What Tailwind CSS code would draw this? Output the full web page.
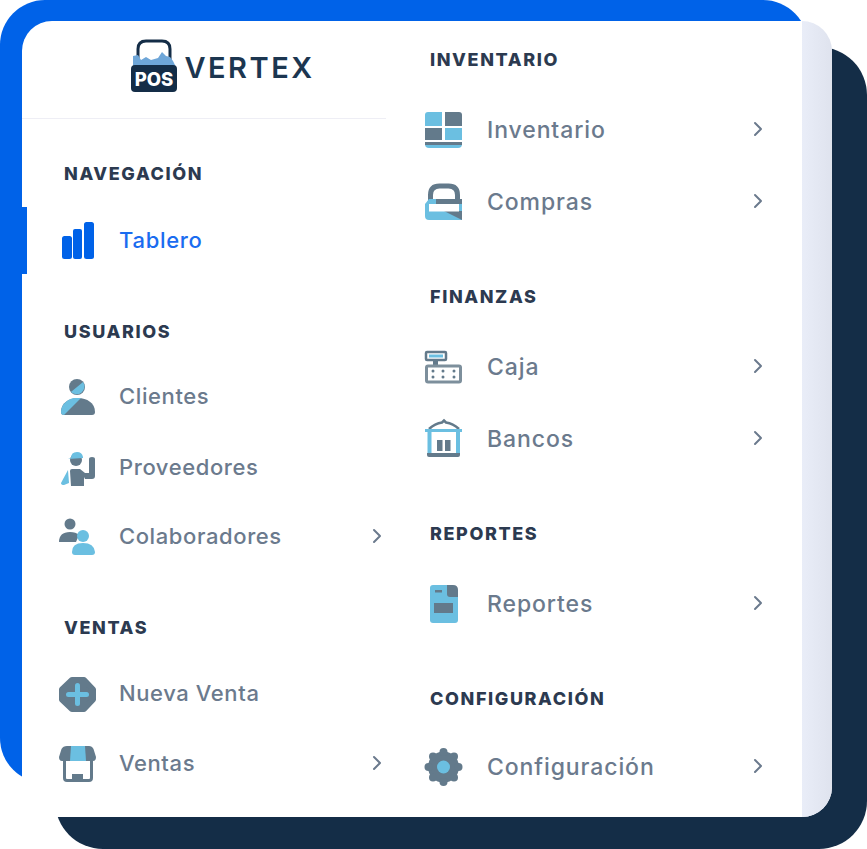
<!DOCTYPE html>
<html lang="es">
<head>
    <meta charset="UTF-8">
    <title>Vertex POS</title>
    <script src="https://cdn.jsdelivr.net/npm/@tailwindcss/browser@4"></script>
</head>
<body class="bg-white">
<div class="relative w-[867px] h-[849px] overflow-hidden font-['Inter',sans-serif]">
    <!-- background layers -->
    <div class="absolute left-[55px] top-[47px] w-[812px] h-[802px] rounded-[48px] bg-[#142d47]"></div>
    <div class="absolute left-0 top-0 w-[808px] h-[783px] rounded-[45px] bg-[#0062e8]"></div>

    <div class="absolute left-[22px] top-[21px] w-[810px] h-[796px] flex overflow-hidden rounded-tl-[30px] rounded-r-[30px] bg-white">
        <!-- left column -->
        <div class="w-[364px] shrink-0">
            <div class="h-[98px] border-b border-[#eeeef5] flex items-center justify-center pl-[37px] gap-[6px]">
                <svg class="w-[48px] h-[54px] shrink-0 mt-[-7px]" viewBox="0 0 48 54">
                    <path d="M8 26V10q0-8 8-8h16q8 0 8 8v16" fill="none" stroke="#142d47" stroke-width="3"/>
                    <path d="M3 17l5-1 3 5 5-3 5 3 7-2 4-6 4 4 4 1 3 4 3 6H3z" fill="#6ea6d8"/>
                    <path d="M1 30q0-4 4-4h38q4 0 4 4v19q0 4-4 4H5q-4 0-4-4z" fill="#142d47"/>
                    <text x="24" y="47" text-anchor="middle" font-family="Inter, sans-serif" font-size="18.500" font-weight="800" fill="#fff">POS</text>
                </svg>
                <span class="text-[29px] leading-none font-semibold tracking-[2.5px] text-[#1c3650] mt-[-4px]">VERTEX</span>
            </div>

            <p class="mt-[42px] ml-[42px] h-6 flex items-center text-[18px] font-extrabold tracking-[1.6px] text-[#2c3a50]">NAVEGACIÓN</p>
            <a class="mt-[22px] h-[67px] flex items-center border-l-[5px] border-[#0062e8] pl-[31px] text-[22px] font-medium tracking-[.7px] text-[#1a6cf0]">
                <svg class="w-[40px] h-[40px] shrink-0 mr-[21px]" viewBox="0 0 40 40">
                    <rect x="4" y="15" width="10" height="23" rx="2.500" fill="#0062e8"/>
                    <rect x="15" y="8" width="9" height="30" rx="2" fill="#0062e8"/>
                    <rect x="26" y="1" width="10" height="37" rx="2.500" fill="#0062e8"/>
                </svg>
                Tablero
            </a>

            <p class="mt-[45px] ml-[42px] h-6 flex items-center text-[18px] font-extrabold tracking-[1.6px] text-[#2c3a50]">USUARIOS</p>
            <a class="mt-[18px] h-[70px] flex items-center pl-[36px] text-[22px] font-medium tracking-[.6px] text-[#6b7a8d]">
                <svg class="w-[40px] h-[40px] shrink-0 mr-[21px]" viewBox="0 0 40 40">
                    <circle cx="19" cy="11" r="8" fill="#637a8b"/>
                    <path d="M12.900 16.100A8 8 0 0 0 25.100 5.900z" fill="#6bbfe1"/>
                    <path d="M3 36C3 27 11 22 20 22s17 5 17 14q0 3-3 3H6q-3 0-3-3z" fill="#637a8b"/>
                    <path d="M3 36c0-8 7-13 13-14h7L6 39q-3 0-3-3z" fill="#6bbfe1"/>
                </svg>
                Clientes
            </a>
            <a class="h-[71px] pt-[2px] flex items-center pl-[36px] text-[22px] font-medium tracking-[.6px] text-[#6b7a8d]">
                <svg class="w-[40px] h-[40px] shrink-0 mr-[21px]" viewBox="0 0 40 40">
                    <circle cx="18" cy="12" r="6" fill="#637a8b"/>
                    <path d="M10 11l3-1q0-6 6-6 5 0 6 5v1z" fill="#6bbfe1"/>
                    <path d="M12 23q0-2 2-2h8l5 4h4V11q0-2 3-2t3 2v17q0 3-3 3h-7l-1-2v9H13z" fill="#637a8b"/>
                    <path d="M10 22l-7 13q0 2 3 2l5-2z" fill="#6bbfe1"/>
                </svg>
                Proveedores
            </a>
            <a class="h-[68px] flex items-center pl-[36px] text-[22px] font-medium tracking-[.6px] text-[#6b7a8d]">
                <svg class="w-[40px] h-[40px] shrink-0 mr-[21px]" viewBox="0 0 40 40">
                    <circle cx="12" cy="8" r="5.500" fill="#637a8b"/>
                    <path d="M1 26q0-10 11-10 6 0 9 3l-3 7z" fill="#637a8b"/>
                    <circle cx="25" cy="20" r="6" fill="#6bbfe1"/>
                    <path d="M14 36q0-9 11-9t12 9q0 3-3 3H17q-3 0-3-3z" fill="#6bbfe1"/>
                </svg>
                Colaboradores
                <svg class="w-[12px] h-[16px] ml-auto mr-[3px]" viewBox="0 0 12 16"><path d="M3 2l6 6-6 6" fill="none" stroke="#6b7a8d" stroke-width="2" stroke-linecap="round" stroke-linejoin="round"/></svg>
            </a>

            <p class="mt-[45px] ml-[42px] h-6 flex items-center text-[18px] font-extrabold tracking-[1.6px] text-[#2c3a50]">VENTAS</p>
            <a class="mt-[19px] h-[70px] flex items-center pl-[36px] text-[22px] font-medium tracking-[.6px] text-[#6b7a8d]">
                <svg class="w-[40px] h-[40px] shrink-0 mr-[21px]" viewBox="0 0 40 40">
                    <path d="M14 7h12l9 9.500v10L26 36H14L4 26.500v-10z" fill="#637a8b" stroke="#637a8b" stroke-linejoin="round" stroke-width="6"/>
                    <rect x="8" y="19" width="23" height="5" rx="2.500" fill="#6bbfe1"/>
                    <rect x="17" y="10" width="5" height="23" rx="2.500" fill="#6bbfe1"/>
                </svg>
                Nueva Venta
            </a>
            <a class="h-[70px] flex items-center pl-[36px] text-[22px] font-medium tracking-[.6px] text-[#6b7a8d]">
                <svg class="w-[40px] h-[40px] shrink-0 mr-[21px]" viewBox="0 0 40 40">
                    <path d="M6.500 17v18q0 2.500 2.500 2.500h22q2.500 0 2.500-2.500V17" fill="#fff" stroke="#637a8b" stroke-width="3"/>
                    <rect x="14" y="31" width="11" height="7" fill="#637a8b"/>
                    <path d="M9 3h22q3 0 4.500 3l2.500 8q0 4-3 4H4q-3 0-3-4l2.500-8Q5 3 9 3z" fill="#637a8b"/>
                    <path d="M13 3h14l1 15H12z" fill="#6bbfe1"/>
                </svg>
                Ventas
                <svg class="w-[12px] h-[16px] ml-auto mr-[3px]" viewBox="0 0 12 16"><path d="M3 2l6 6-6 6" fill="none" stroke="#6b7a8d" stroke-width="2" stroke-linecap="round" stroke-linejoin="round"/></svg>
            </a>
        </div>

        <!-- right column -->
        <div class="w-[416px] shrink-0 pt-[26px]">
            <p class="ml-[44px] h-6 flex items-center text-[18px] font-extrabold tracking-[1.6px] text-[#2c3a50]">INVENTARIO</p>
            <a class="mt-[23px] h-[70px] flex items-center pl-[38px] pr-[38px] text-[23px] font-medium tracking-[.9px] text-[#6b7a8d]">
                <svg class="w-[40px] h-[40px] shrink-0 mr-[23px]" viewBox="0 0 40 40">
                    <path d="M1 6q0-3 3-3h14v14H1z" fill="#6bbfe1"/>
                    <path d="M21 3h14q3 0 3 3v11H21z" fill="#637a8b"/>
                    <rect x="1" y="19" width="17" height="12" fill="#637a8b"/>
                    <rect x="21" y="19" width="17" height="12" fill="#6bbfe1"/>
                    <path d="M1 33h37v2q0 4-4 4H5q-4 0-4-4z" fill="#6bbfe1"/>
                    <rect x="1" y="33" width="37" height="3" fill="#637a8b"/>
                </svg>
                <span class="mt-[2px]">Inventario</span>
                <svg class="w-[12px] h-[16px] ml-auto" viewBox="0 0 12 16"><path d="M3 2l6 6-6 6" fill="none" stroke="#6b7a8d" stroke-width="2" stroke-linecap="round" stroke-linejoin="round"/></svg>
            </a>
            <a class="h-[74px] flex items-center pl-[38px] pr-[38px] text-[23px] font-medium tracking-[.9px] text-[#6b7a8d]">
                <svg class="w-[40px] h-[40px] shrink-0 mr-[23px]" viewBox="0 0 40 40">
                    <path d="M6.500 20v-6q0-9 9-9h9q9 0 9 9v6" fill="none" stroke="#637a8b" stroke-width="5"/>
                    <path d="M1 23l4-5h33v21H5q-4 0-4-4z" fill="#6bbfe1"/>
                    <path d="M12 18h26v5H12z" fill="#637a8b"/>
                    <path d="M20 30h18v9z" fill="#637a8b"/>
                    <rect x="5" y="23" width="30" height="7.500" fill="#fff"/>
                </svg>
                <span class="mt-[2px]">Compras</span>
                <svg class="w-[12px] h-[16px] ml-auto" viewBox="0 0 12 16"><path d="M3 2l6 6-6 6" fill="none" stroke="#6b7a8d" stroke-width="2" stroke-linecap="round" stroke-linejoin="round"/></svg>
            </a>

            <p class="mt-[46px] ml-[44px] h-6 flex items-center text-[18px] font-extrabold tracking-[1.6px] text-[#2c3a50]">FINANZAS</p>
            <a class="mt-[23px] h-[70px] flex items-center pl-[38px] pr-[38px] text-[23px] font-medium tracking-[.9px] text-[#6b7a8d]">
                <svg class="w-[40px] h-[40px] shrink-0 mr-[23px]" viewBox="0 0 40 40">
                    <rect x="2" y="6" width="20" height="8" rx="1" fill="#fff" stroke="#637a8b" stroke-width="2.500"/>
                    <rect x="5" y="8.500" width="14" height="3" fill="#6bbfe1"/>
                    <rect x="9" y="14" width="5" height="6" fill="#637a8b"/>
                    <rect x="2.500" y="20" width="34" height="16" rx="1.500" fill="#fff" stroke="#7d8f9c" stroke-width="3"/>
                    <g fill="#637a8b">
                        <circle cx="9" cy="25" r="1.500"/><circle cx="19" cy="25" r="1.500"/><circle cx="30" cy="25" r="1.500"/>
                        <circle cx="9" cy="31" r="1.500"/><circle cx="19" cy="31" r="1.500"/><circle cx="30" cy="31" r="1.500"/>
                    </g>
                </svg>
                <span class="mt-[2px]">Caja</span>
                <svg class="w-[12px] h-[16px] ml-auto" viewBox="0 0 12 16"><path d="M3 2l6 6-6 6" fill="none" stroke="#6b7a8d" stroke-width="2" stroke-linecap="round" stroke-linejoin="round"/></svg>
            </a>
            <a class="h-[74px] flex items-center pl-[38px] pr-[38px] text-[23px] font-medium tracking-[.9px] text-[#6b7a8d]">
                <svg class="w-[40px] h-[40px] shrink-0 mr-[23px]" viewBox="0 0 40 40">
                    <path d="M5 11Q11 5.500 18 4.500l2-2 2 2q7 1 13 6.500" fill="#fff" stroke="#637a8b" stroke-width="2.500"/>
                    <rect x="1" y="11" width="37" height="3" fill="#6bbfe1"/>
                    <rect x="3.500" y="13" width="4" height="23" fill="#6bbfe1"/>
                    <rect x="32" y="13" width="4" height="23" fill="#6bbfe1"/>
                    <rect x="13" y="22" width="5.500" height="11" fill="#637a8b"/>
                    <rect x="21" y="22" width="5.500" height="11" fill="#637a8b"/>
                    <path d="M3 35h33v2q0 2-2 2H5q-2 0-2-2z" fill="#637a8b"/>
                </svg>
                <span class="mt-[2px]">Bancos</span>
                <svg class="w-[12px] h-[16px] ml-auto" viewBox="0 0 12 16"><path d="M3 2l6 6-6 6" fill="none" stroke="#6b7a8d" stroke-width="2" stroke-linecap="round" stroke-linejoin="round"/></svg>
            </a>

            <p class="mt-[46px] ml-[44px] h-6 flex items-center text-[18px] font-extrabold tracking-[1.6px] text-[#2c3a50]">REPORTES</p>
            <a class="mt-[23px] h-[70px] flex items-center pl-[38px] pr-[38px] text-[23px] font-medium tracking-[.9px] text-[#6b7a8d]">
                <svg class="w-[40px] h-[40px] shrink-0 mr-[23px]" viewBox="0 0 40 40">
                    <path d="M6 5q0-3 3-3h14l11 12v23q0 3-3 3H9q-3 0-3-3z" fill="#6bbfe1"/>
                    <path d="M23 2h6q5 0 5 5v7H26q-3 0-3-3z" fill="#637a8b"/>
                    <rect x="11" y="7" width="7" height="2.500" fill="#637a8b"/>
                    <rect x="10" y="20" width="19" height="10" fill="#637a8b"/>
                </svg>
                <span class="mt-[2px]">Reportes</span>
                <svg class="w-[12px] h-[16px] ml-auto" viewBox="0 0 12 16"><path d="M3 2l6 6-6 6" fill="none" stroke="#6b7a8d" stroke-width="2" stroke-linecap="round" stroke-linejoin="round"/></svg>
            </a>

            <p class="mt-[48px] ml-[44px] h-6 flex items-center text-[18px] font-extrabold tracking-[1.6px] text-[#2c3a50]">CONFIGURACIÓN</p>
            <a class="mt-[21px] h-[70px] flex items-center pl-[38px] pr-[38px] text-[23px] font-medium tracking-[.9px] text-[#6b7a8d]">
                <svg class="w-[40px] h-[40px] shrink-0 mr-[23px]" viewBox="0 0 40 40">
                    <g fill="#637a8b">
                        <circle cx="19.500" cy="21" r="15.500"/>
                        <circle cx="19.500" cy="6" r="4"/><circle cx="19.500" cy="36" r="4"/>
                        <circle cx="4.500" cy="21" r="4"/><circle cx="34.500" cy="21" r="4"/>
                        <circle cx="9" cy="10.500" r="4"/><circle cx="30" cy="10.500" r="4"/>
                        <circle cx="9" cy="31.500" r="4"/><circle cx="30" cy="31.500" r="4"/>
                    </g>
                    <circle cx="19.500" cy="21" r="6.500" fill="#6bbfe1"/>
                </svg>
                <span class="mt-[2px]">Configuración</span>
                <svg class="w-[12px] h-[16px] ml-auto" viewBox="0 0 12 16"><path d="M3 2l6 6-6 6" fill="none" stroke="#6b7a8d" stroke-width="2" stroke-linecap="round" stroke-linejoin="round"/></svg>
            </a>
        </div>

        <!-- side strip -->
        <div class="w-[30px] shrink-0 bg-linear-to-r from-[#e9edf8] to-[#dfe3ee]"></div>
    </div>
</div>
</body>
</html>
